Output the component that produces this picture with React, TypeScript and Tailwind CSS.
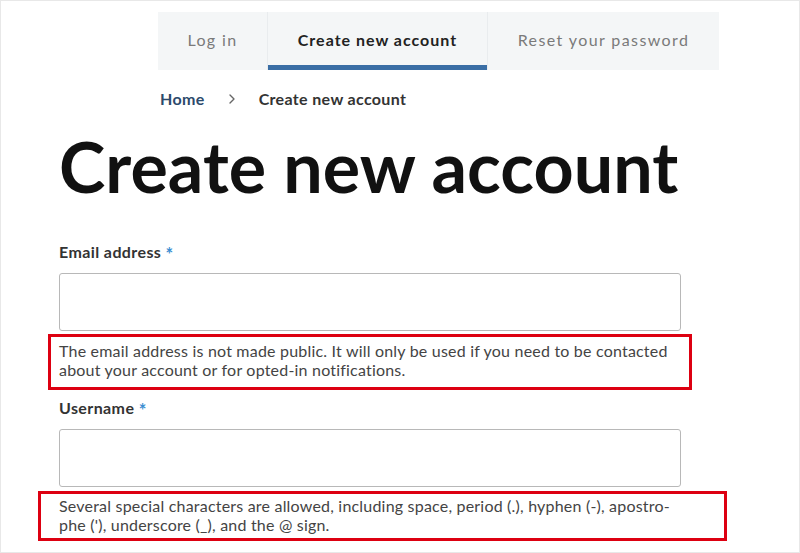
import { ChevronRight } from "lucide-react";

const tabs = [
  { label: "Log in", active: false, width: "w-[109px]" },
  { label: "Create new account", active: true, width: "w-[220px]" },
  { label: "Reset your password", active: false, width: "w-[232px]" },
];

function Field({
  label,
  description,
  boxClass,
}: {
  label: string;
  description: string;
  boxClass: string;
}) {
  return (
    <div className="flex flex-col">
      <label className="h-5 text-[16px] font-bold leading-5 tracking-[0.4px] text-[#333]">
        {label}{" "}
        <span className="relative top-[3px] text-[18px] text-[#3b8ed1]">*</span>
      </label>
      <input
        type="text"
        className="mt-[12px] h-[58px] w-[622px] rounded-[3px] border border-[#b8b8b8] bg-white"
      />
      <div className={boxClass}>{description}</div>
    </div>
  );
}

export default function App() {
  return (
    <div
      className="h-[553px] w-[800px] overflow-hidden border border-[#e8e8e8] bg-white"
      style={{ fontFamily: "Lato, 'Noto Sans', sans-serif" }}
    >
      <nav className="ml-[157px] mt-[11px] flex h-[58px] w-[561px] bg-[#f4f6f7]">
        {tabs.map((t) => (
          <div
            key={t.label}
            className={`${t.width} relative flex items-center justify-center border-l border-[#e9ecee] pb-[2px] text-[16px] first:border-l-0 ${
              t.active
                ? "font-bold tracking-[1px] text-[#222]"
                : "tracking-[1.4px] text-[#7a7a7a]"
            }`}
          >
            {t.label}
            {t.active && (
              <span className="absolute bottom-0 left-0 right-0 h-[5px] bg-[#3a6ea5]" />
            )}
          </div>
        ))}
      </nav>

      <div className="ml-[159px] mt-[17px] flex items-center text-[16px] font-bold tracking-[0.35px]">
        <span className="text-[#2c4a6c]">Home</span>
        <ChevronRight className="mx-[19px] h-4 w-4 text-[#666]" strokeWidth={2} />
        <span className="text-[#333]">Create new account</span>
      </div>

      <h1 className="ml-[58px] mt-[15px] text-[70px] font-bold leading-[80px] tracking-[0.05px] text-[#111]">
        Create new account
      </h1>

      <div className="ml-[58px] mt-[35px] flex flex-col gap-[7px]">
        <Field
          label="Email address"
          description="The email address is not made public. It will only be used if you need to be contacted about your account or for opted-in notifications."
          boxClass="-ml-[11px] mt-[3px] w-[644px] border-[3px] border-[#dd0011] pt-[4px] pb-[8px] pl-[8px] pr-[8px] text-[16px] leading-[19px] tracking-[0.2px] text-[#444]"
        />
        <Field
          label="Username"
          description={"Several special characters are allowed, including space, period (.), hyphen (-), apostro\u00ADphe ('), underscore (_), and the @ sign."}
          boxClass="-ml-[21px] mt-[4px] w-[689px] border-[3px] border-[#dd0011] pt-[2px] pb-[4px] pl-[18px] pr-[36px] text-[16px] leading-[19px] tracking-[0.2px] text-[#444]"
        />
      </div>
    </div>
  );
}
